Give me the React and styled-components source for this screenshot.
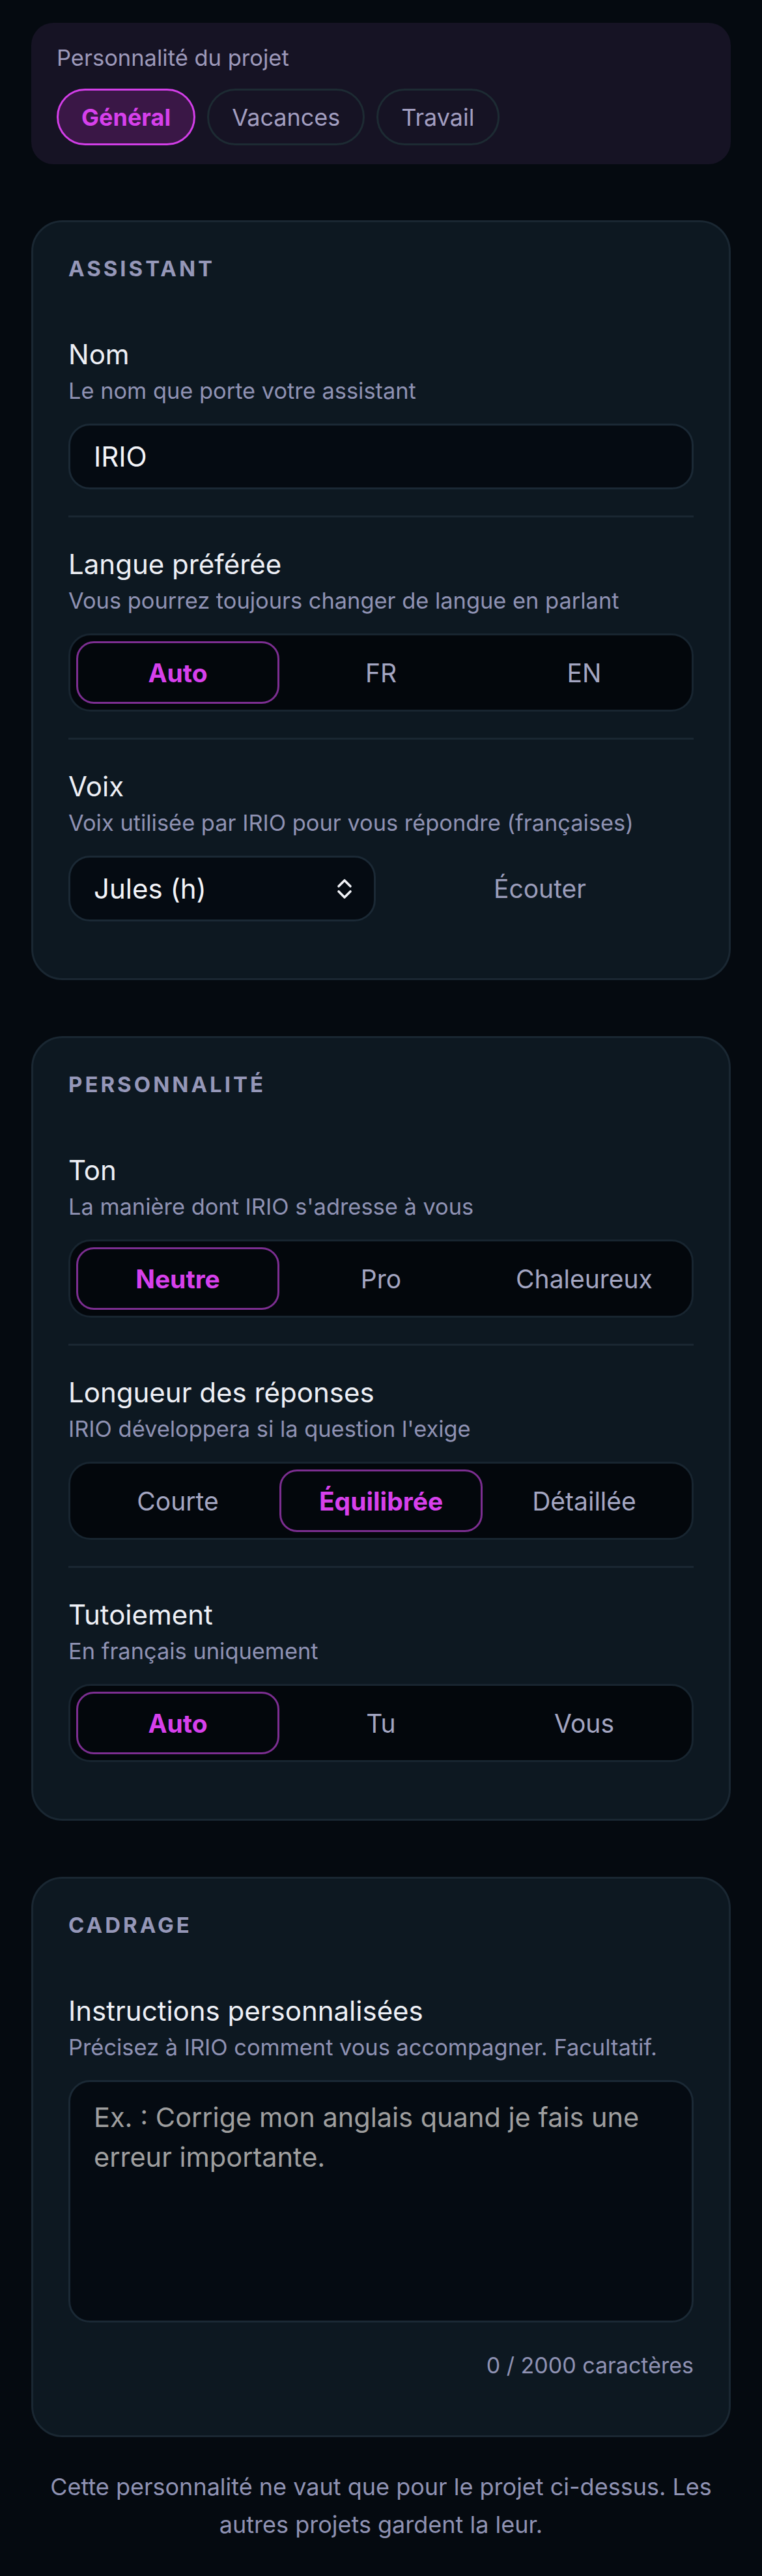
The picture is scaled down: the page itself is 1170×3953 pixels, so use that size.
import React from "react";
import styled, { createGlobalStyle } from "styled-components";

const GlobalStyle = createGlobalStyle`
  * {
    box-sizing: border-box;
  }

  body {
    margin: 0;
    background: #050a10;
    font-family: Inter, "Noto Sans", sans-serif;
    -webkit-font-smoothing: antialiased;
  }
`;

const projects = ["Général", "Vacances", "Travail"];

const sections = [
  {
    title: "Assistant",
    fields: [
      { label: "Nom", hint: "Le nom que porte votre assistant", type: "input", value: "IRIO" },
      {
        label: "Langue préférée",
        hint: "Vous pourrez toujours changer de langue en parlant",
        type: "segmented",
        options: ["Auto", "FR", "EN"],
        active: 0,
      },
      { label: "Voix", hint: "Voix utilisée par IRIO pour vous répondre (françaises)", type: "voice" },
    ],
  },
  {
    title: "Personnalité",
    fields: [
      {
        label: "Ton",
        hint: "La manière dont IRIO s'adresse à vous",
        type: "segmented",
        options: ["Neutre", "Pro", "Chaleureux"],
        active: 0,
      },
      {
        label: "Longueur des réponses",
        hint: "IRIO développera si la question l'exige",
        type: "segmented",
        options: ["Courte", "Équilibrée", "Détaillée"],
        active: 1,
      },
      {
        label: "Tutoiement",
        hint: "En français uniquement",
        type: "segmented",
        options: ["Auto", "Tu", "Vous"],
        active: 0,
      },
    ],
  },
  {
    title: "Cadrage",
    fields: [
      {
        label: "Instructions personnalisées",
        hint: "Précisez à IRIO comment vous accompagner. Facultatif.",
        type: "textarea",
      },
    ],
  },
];

function UpDownIcon() {
  return (
    <svg width="24" height="34" viewBox="0 0 24 34" fill="none">
      <path
        d="M3 13 L12 4 L21 13 M3 21 L12 30 L21 21"
        stroke="#f2f3f8"
        strokeWidth="3.6"
        strokeLinecap="round"
        strokeLinejoin="round"
      />
    </svg>
  );
}

function Control({ field }) {
  if (field.type === "input") {
    return <TextInput defaultValue={field.value} />;
  }
  if (field.type === "segmented") {
    return (
      <Segmented>
        {field.options.map((opt, i) => (
          <SegButton key={opt} $active={i === field.active}>
            {opt}
          </SegButton>
        ))}
      </Segmented>
    );
  }
  if (field.type === "voice") {
    return (
      <VoiceRow>
        <Select>
          <span>Jules (h)</span>
          <UpDownIcon />
        </Select>
        <ListenButton>Écouter</ListenButton>
      </VoiceRow>
    );
  }
  return (
    <>
      <TextArea placeholder="Ex. : Corrige mon anglais quand je fais une erreur importante." />
      <Counter>0 / 2000 caractères</Counter>
    </>
  );
}

export default function App() {
  return (
    <>
      <GlobalStyle />
      <Page>
        <Stack>
          <ProjectCard>
            <ProjectLabel>Personnalité du projet</ProjectLabel>
            <Chips>
              {projects.map((p, i) => (
                <Chip key={p} $active={i === 0}>
                  {p}
                </Chip>
              ))}
            </Chips>
          </ProjectCard>

          {sections.map((section) => (
            <Card key={section.title}>
              <SectionTitle>{section.title}</SectionTitle>
              {section.fields.map((field) => (
                <Field key={field.label}>
                  <Label>{field.label}</Label>
                  <Hint>{field.hint}</Hint>
                  <ControlWrap>
                    <Control field={field} />
                  </ControlWrap>
                </Field>
              ))}
            </Card>
          ))}
        </Stack>

        <Footer>
          Cette personnalité ne vaut que pour le projet ci-dessus. Les autres projets gardent la leur.
        </Footer>
      </Page>
    </>
  );
}

const Page = styled.div`
  padding: 35px 48px 53px;
`;

const Stack = styled.div`
  display: flex;
  flex-direction: column;
  gap: 86px;
`;

const ProjectCard = styled.div`
  background: #161324;
  border-radius: 34px;
  padding: 34px 39px 29px;
`;

const ProjectLabel = styled.div`
  font-size: 34.5px;
  line-height: 40px;
  color: #9d99ba;
`;

const Chips = styled.div`
  display: flex;
  gap: 18px;
  margin-top: 27px;
`;

const Chip = styled.button`
  height: 87px;
  padding: 0 35px;
  border-radius: 999px;
  border: 3px solid ${(p) => (p.$active ? "#d33ee8" : "#1d2b33")};
  background: ${(p) => (p.$active ? "#3a1746" : "transparent")};
  color: ${(p) => (p.$active ? "#d740ec" : "#a29ec0")};
  font-family: inherit;
  font-size: 36px;
  font-weight: ${(p) => (p.$active ? 700 : 400)};
`;

const Card = styled.section`
  background: #0d1821;
  border: 3px solid #1a2732;
  border-radius: 48px;
  padding: 51px 54px 47px;
`;

const SectionTitle = styled.h2`
  margin: 0 0 40px;
  font-size: 33px;
  line-height: 40px;
  font-weight: 700;
  letter-spacing: 4px;
  text-transform: uppercase;
  color: #9597b8;
`;

const Field = styled.div`
  padding: 47px 0 40px;

  & + & {
    border-top: 3px solid #1a2732;
  }
`;

const Label = styled.div`
  font-size: 42px;
  line-height: 50px;
  color: #eef0f6;
`;

const Hint = styled.div`
  margin-top: 10px;
  font-size: 34.4px;
  line-height: 42px;
  color: #8f92b3;
`;

const ControlWrap = styled.div`
  margin-top: 29px;
`;

const TextInput = styled.input`
  display: block;
  width: 100%;
  height: 101px;
  padding: 0 36px;
  border: 3px solid #1b2935;
  border-radius: 33px;
  background: #050b12;
  color: #f4f5f9;
  font-family: inherit;
  font-size: 42px;
  outline: none;
`;

const Segmented = styled.div`
  display: grid;
  grid-template-columns: repeat(3, 1fr);
  height: 120px;
  padding: 9px;
  border: 3px solid #182530;
  border-radius: 34px;
  background: #03070c;
`;

const SegButton = styled.button`
  border: 3px solid ${(p) => (p.$active ? "#7c2e91" : "transparent")};
  border-radius: 27px;
  background: transparent;
  color: ${(p) => (p.$active ? "#d740ec" : "#a4a6c2")};
  font-family: inherit;
  font-size: 39px;
  font-weight: ${(p) => (p.$active ? 700 : 400)};
`;

const VoiceRow = styled.div`
  display: grid;
  grid-template-columns: 1fr 1fr;
  gap: 16px;
`;

const Select = styled.button`
  display: flex;
  align-items: center;
  justify-content: space-between;
  height: 101px;
  padding: 0 33px 0 36px;
  border: 3px solid #1b2935;
  border-radius: 33px;
  background: #050b12;
  color: #f4f5f9;
  font-family: inherit;
  font-size: 42px;
  text-align: left;
`;

const ListenButton = styled.button`
  border: none;
  background: transparent;
  color: #9b9dba;
  font-family: inherit;
  font-size: 39px;
`;

const TextArea = styled.textarea`
  display: block;
  width: 100%;
  height: 372px;
  padding: 24px 36px;
  border: 3px solid #1b2935;
  border-radius: 33px;
  background: #050b12;
  color: #f4f5f9;
  font-family: inherit;
  font-size: 41.5px;
  line-height: 61px;
  resize: none;
  outline: none;

  &::placeholder {
    color: #9f9f9f;
  }
`;

const Counter = styled.div`
  margin-top: 46px;
  text-align: right;
  font-size: 34px;
  line-height: 40px;
  color: #8f92b3;
`;

const Footer = styled.p`
  margin: 47px 0 0;
  padding: 0 20px;
  text-align: center;
  font-size: 36px;
  line-height: 58px;
  color: #8f92b3;
`;
